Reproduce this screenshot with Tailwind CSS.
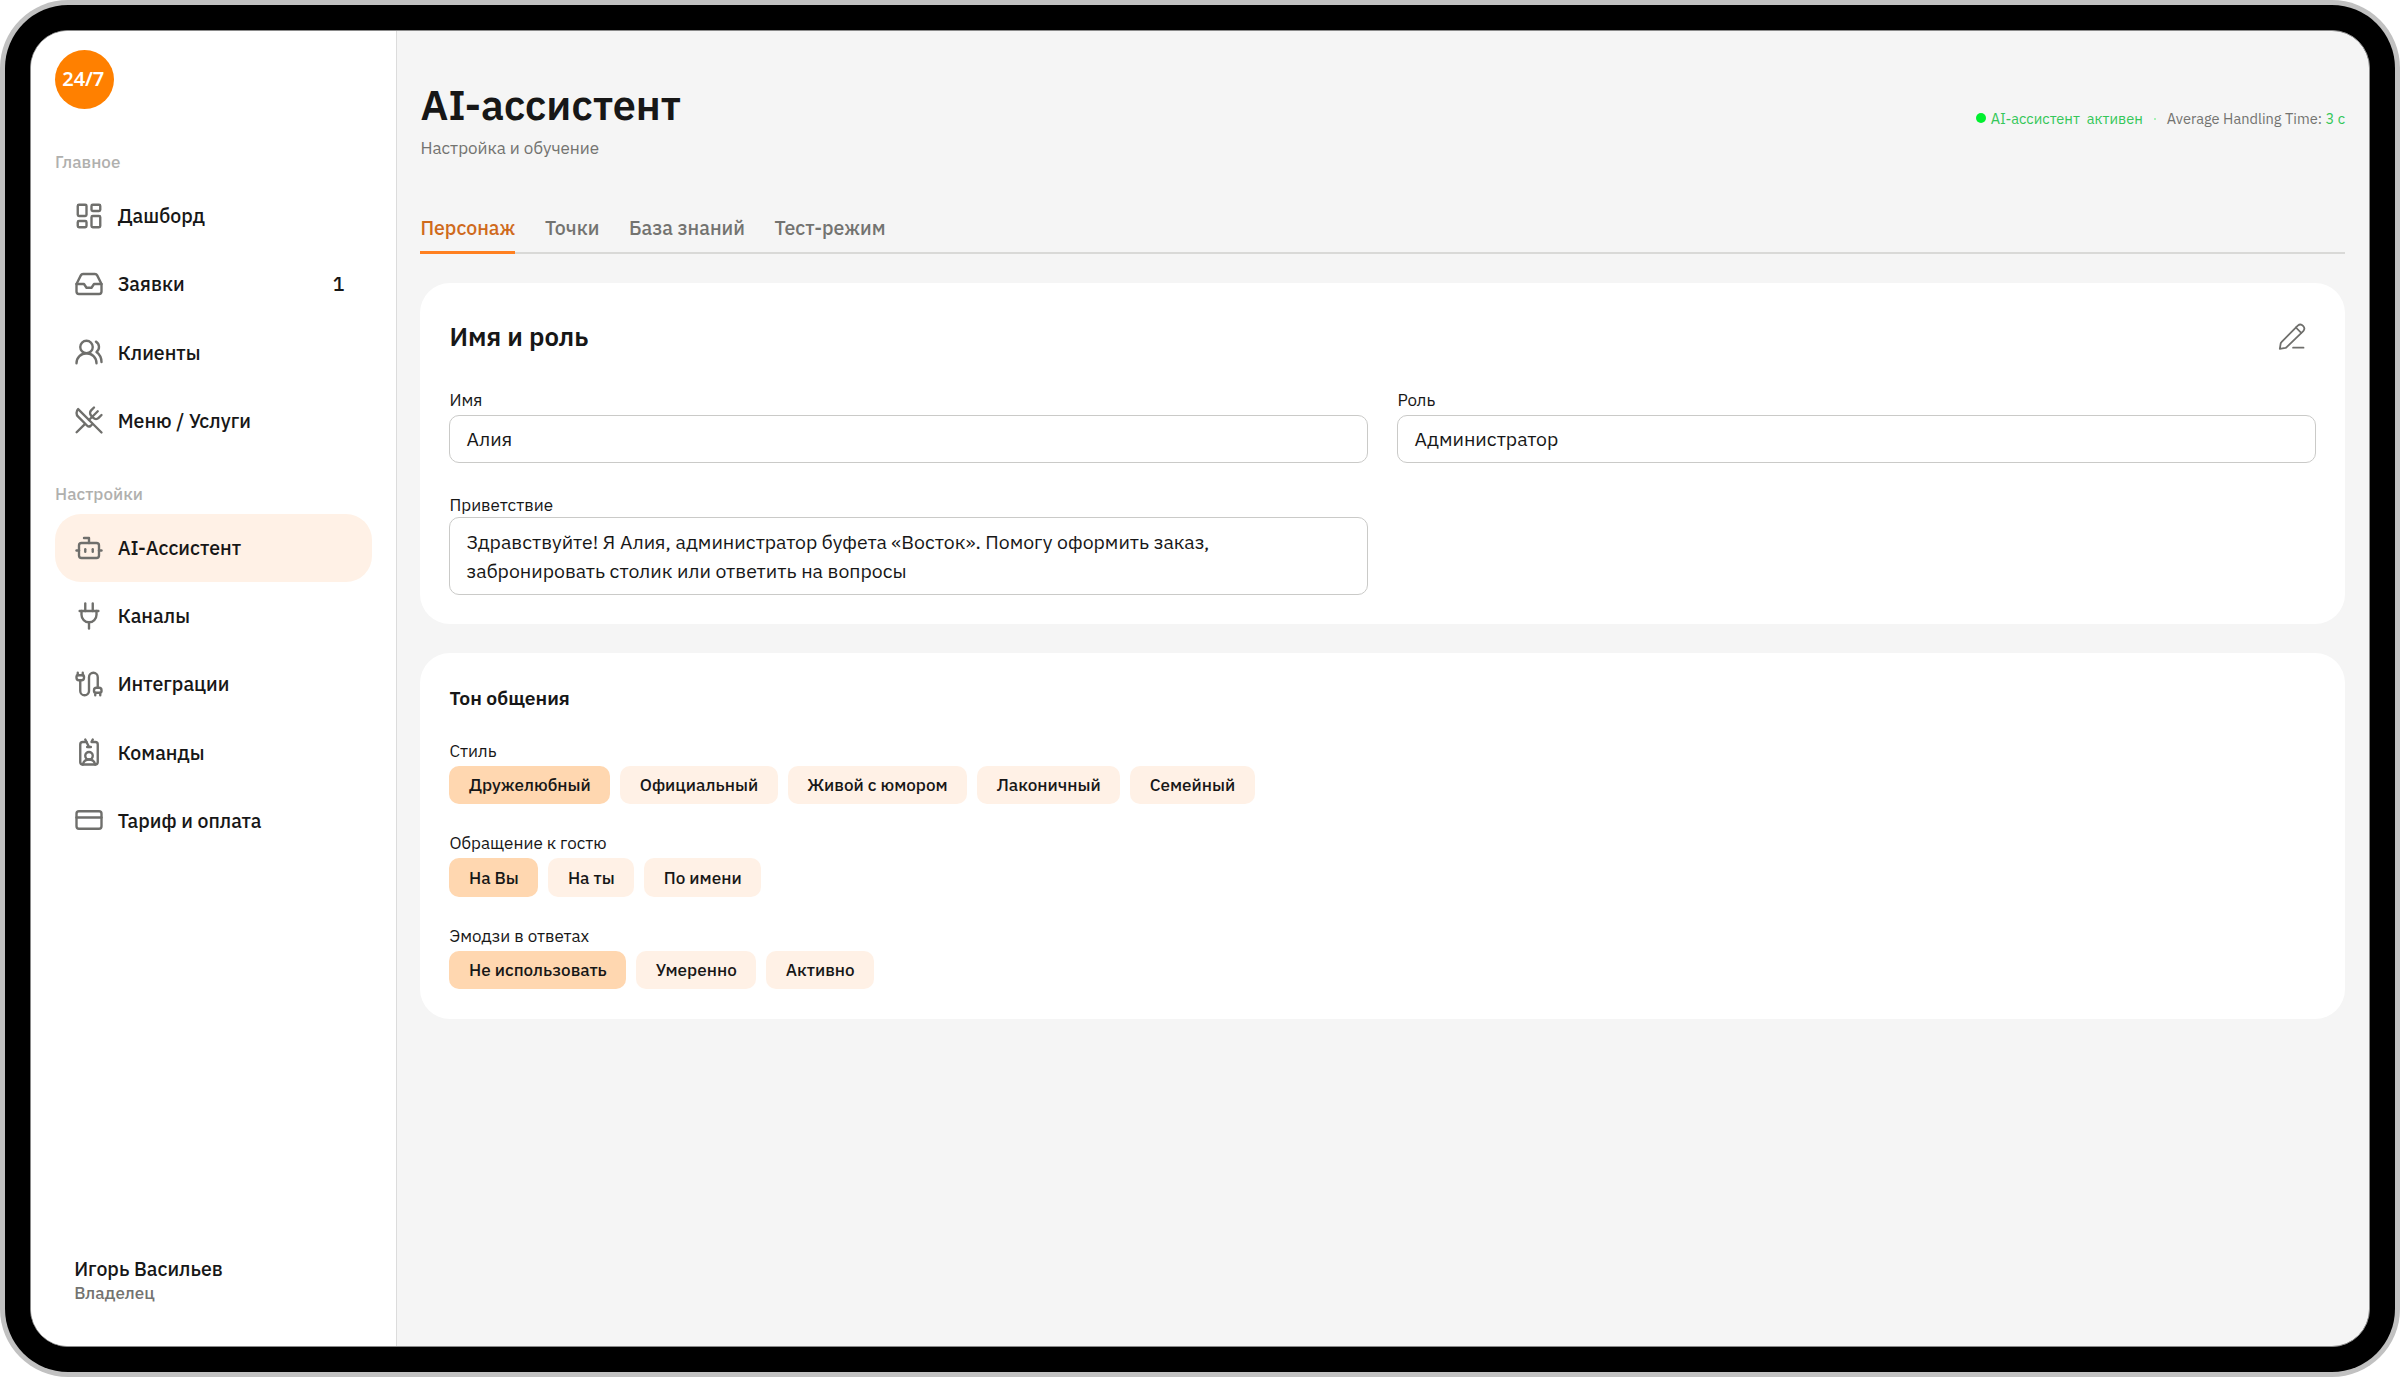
<!DOCTYPE html>
<html lang="ru">

<head>
    <meta charset="UTF-8">
    <meta name="viewport" content="width=device-width, initial-scale=1.0">
    <title>AI-ассистент</title>
    <script src="https://cdn.jsdelivr.net/npm/@tailwindcss/browser@4"></script>
</head>

<body class="bg-white font-['IBM_Plex_Sans','Noto_Sans',sans-serif] text-[#171717]">
    <!-- Tablet frame -->
    <div class="w-screen h-screen bg-[#c1c1c1] rounded-[68px] p-[5px]">
        <div class="w-full h-full bg-black rounded-[63px] p-[25px]">
            <div class="w-full h-full flex bg-[#f5f5f5] border border-[#8a8a8a] rounded-[38px] overflow-hidden">

                <!-- Sidebar -->
                <aside class="w-[366px] shrink-0 flex flex-col bg-white border-r border-[#dcdcdc] pt-[19px] pl-6 pr-[24.5px]">
                    <div class="size-[58.5px] rounded-full bg-[#ff8000] flex items-center justify-center text-white"><span class="font-['Noto_Sans',sans-serif] text-[20px] font-semibold tracking-[-0.1px] pr-0.5">24/7</span></div>

                    <p class="mt-[40.3px] h-[26px] leading-[26px] text-[17px] font-medium text-[#b0b0ae]">Главное</p>
                    <nav class="mt-[7px] text-[19.5px] font-medium">
                        <a class="flex items-center h-[68.2px] rounded-[26px] pl-[18.7px] pr-[27px] gap-[14px]">
                            <svg class="size-[30px] text-[#6f6f6c]" viewBox="0 0 24 24" fill="none" stroke="currentColor" stroke-width="1.9" stroke-linecap="round" stroke-linejoin="round">
                                <rect width="7" height="9" x="3" y="3" rx="1" /><rect width="7" height="5" x="14" y="3" rx="1" /><rect width="7" height="9" x="14" y="12" rx="1" /><rect width="7" height="5" x="3" y="16" rx="1" />
                            </svg>
                            <span>Дашборд</span>
                        </a>
                        <a class="flex items-center h-[68.2px] rounded-[26px] pl-[18.7px] pr-[27px] gap-[14px]">
                            <svg class="size-[30px] text-[#6f6f6c]" viewBox="0 0 24 24" fill="none" stroke="currentColor" stroke-width="1.9" stroke-linecap="round" stroke-linejoin="round">
                                <path d="M22 12h-6l-2 3h-4l-2-3H2" /><path d="M5.45 5.11 2 12v6a2 2 0 0 0 2 2h16a2 2 0 0 0 2-2v-6l-3.45-6.89A2 2 0 0 0 16.76 4H7.24a2 2 0 0 0-1.79 1.11z" />
                            </svg>
                            <span>Заявки</span>
                            <span class="ml-auto">1</span>
                        </a>
                        <a class="flex items-center h-[68.2px] rounded-[26px] pl-[18.7px] pr-[27px] gap-[14px]">
                            <svg class="size-[30px] text-[#6f6f6c]" viewBox="0 0 24 24" fill="none" stroke="currentColor" stroke-width="1.9" stroke-linecap="round" stroke-linejoin="round">
                                <path d="M18 21a8 8 0 0 0-16 0" /><circle cx="10" cy="8" r="5" /><path d="M22 20c0-3.37-2-6.5-4-8a5 5 0 0 0-.45-8.3" />
                            </svg>
                            <span>Клиенты</span>
                        </a>
                        <a class="flex items-center h-[68.2px] rounded-[26px] pl-[18.7px] pr-[27px] gap-[14px]">
                            <svg class="size-[30px] text-[#6f6f6c]" viewBox="0 0 24 24" fill="none" stroke="currentColor" stroke-width="1.9" stroke-linecap="round" stroke-linejoin="round">
                                <path d="m16 2-2.3 2.3a3 3 0 0 0 0 4.2l1.8 1.8a3 3 0 0 0 4.2 0L22 8" /><path d="M15 15 3.3 3.3a4.2 4.2 0 0 0 0 6l7.3 7.3c.7.7 2 .7 2.8 0L15 15Zm0 0 7 7" /><path d="m2.1 21.8 6.4-6.3" /><path d="m19 5-7 7" />
                            </svg>
                            <span>Меню / Услуги</span>
                        </a>
                    </nav>

                    <p class="mt-[26.4px] h-[26px] leading-[26px] text-[17px] font-medium text-[#b0b0ae]">Настройки</p>
                    <nav class="mt-[6.6px] text-[19.5px] font-medium">
                        <a class="flex items-center h-[68.2px] rounded-[26px] pl-[18.7px] pr-[27px] gap-[14px] bg-[#fff1e6]">
                            <svg class="size-[30px] text-[#6f6f6c]" viewBox="0 0 24 24" fill="none" stroke="currentColor" stroke-width="1.9" stroke-linecap="round" stroke-linejoin="round">
                                <path d="M12 8V4H8" /><rect width="16" height="12" x="4" y="8" rx="2" /><path d="M2 14h2" /><path d="M20 14h2" /><path d="M15 13v2" /><path d="M9 13v2" />
                            </svg>
                            <span>AI-Ассистент</span>
                        </a>
                        <a class="flex items-center h-[68.2px] rounded-[26px] pl-[18.7px] pr-[27px] gap-[14px]">
                            <svg class="size-[30px] text-[#6f6f6c]" viewBox="0 0 24 24" fill="none" stroke="currentColor" stroke-width="1.9" stroke-linecap="round" stroke-linejoin="round">
                                <path d="M12 22v-5" /><path d="M9 8V2" /><path d="M15 8V2" /><path d="M18 8v3a6 6 0 0 1-12 0V8" /><path d="M4.5 8h15" />
                            </svg>
                            <span>Каналы</span>
                        </a>
                        <a class="flex items-center h-[68.2px] rounded-[26px] pl-[18.7px] pr-[27px] gap-[14px]">
                            <svg class="size-[30px] text-[#6f6f6c]" viewBox="0 0 24 24" fill="none" stroke="currentColor" stroke-width="1.9" stroke-linecap="round" stroke-linejoin="round">
                                <path d="M17 21v-2a1 1 0 0 1-1-1v-1a2 2 0 0 1 2-2h2a2 2 0 0 1 2 2v1a1 1 0 0 1-1 1v2" /><path d="M19 15V6.5a3.5 3.5 0 0 0-7 0v11a3.5 3.5 0 0 1-7 0V9" /><path d="M21 19h-4" /><path d="M3 5V3" /><path d="M7 5V3" /><path d="M2 6a1 1 0 0 1 1-1h4a1 1 0 0 1 1 1v1a2 2 0 0 1-2 2H4a2 2 0 0 1-2-2z" />
                            </svg>
                            <span>Интеграции</span>
                        </a>
                        <a class="flex items-center h-[68.2px] rounded-[26px] pl-[18.7px] pr-[27px] gap-[14px]">
                            <svg class="size-[30px] text-[#6f6f6c]" viewBox="0 0 24 24" fill="none" stroke="currentColor" stroke-width="1.9" stroke-linecap="round" stroke-linejoin="round">
                                <path d="M13.5 8h-3" /><path d="m15 2-1 2h3a2 2 0 0 1 2 2v14a2 2 0 0 1-2 2H7a2 2 0 0 1-2-2V6a2 2 0 0 1 2-2h3" /><path d="M16.899 22A5 5 0 0 0 7.1 22" /><path d="m9 2 3 6" /><circle cx="12" cy="15" r="3" />
                            </svg>
                            <span>Команды</span>
                        </a>
                        <a class="flex items-center h-[68.2px] rounded-[26px] pl-[18.7px] pr-[27px] gap-[14px]">
                            <svg class="size-[30px] text-[#6f6f6c]" viewBox="0 0 24 24" fill="none" stroke="currentColor" stroke-width="1.9" stroke-linecap="round" stroke-linejoin="round">
                                <rect width="20" height="14" x="2" y="5" rx="2" /><path d="M2 10h20" />
                            </svg>
                            <span>Тариф и оплата</span>
                        </a>
                    </nav>

                    <div class="mt-auto pl-[19.2px] pb-[40.6px] font-medium">
                        <p class="text-[19.5px] leading-[26.4px]">Игорь Васильев</p>
                        <p class="text-[17px] leading-[23.4px] text-[#737370]">Владелец</p>
                    </div>
                </aside>

                <!-- Content -->
                <main class="flex-1 pt-[48.6px] pl-[23.4px] pr-6">
                    <div class="flex items-start justify-between">
                        <div>
                            <h1 class="text-[41.4px] leading-[50px] font-semibold">AI-ассистент</h1>
                            <p class="mt-1.5 text-[17px] leading-6 text-[#737370]">Настройка и обучение</p>
                        </div>
                        <div class="mt-[29.8px] flex items-center text-[14.6px] leading-5 text-[#34c759] whitespace-pre">
                            <span class="size-2.5 rounded-full bg-[#00f02f] mr-[4.5px] -mt-0.5"></span>
                            <span>AI-ассистент  активен</span>
                            <span class="size-[2px] rounded-full bg-[#8cf0a0] mx-[11px]"></span>
                            <span class="text-[#737370]">Average Handling Time: </span><span>3 с</span>
                        </div>
                    </div>

                    <!-- Tabs -->
                    <div class="mt-[54.4px] flex gap-[29.6px] border-b-2 border-[#d9d9d7] text-[19.5px] leading-7 font-medium text-[#737370]">
                        <button class="-mb-0.5 pb-[9.3px] border-b-[3px] border-[#ff8020] text-[#cf6a1c]">Персонаж</button>
                        <button class="pb-[10.3px]">Точки</button>
                        <button class="pb-[10.3px]">База знаний</button>
                        <button class="pb-[10.3px]">Тест-режим</button>
                    </div>

                    <!-- Name and role -->
                    <section class="mt-[28.7px] h-[341px] bg-white rounded-[30px] px-[29.1px] pt-[35.4px]">
                        <div class="flex items-center justify-between h-9 pr-[8.4px]">
                            <h2 class="text-[25.8px] leading-9 pt-px font-semibold">Имя и роль</h2>
                            <svg class="size-[30.6px] text-[#6f6f6c]" viewBox="0 0 24 24" fill="none" stroke="currentColor" stroke-width="1.4" stroke-linecap="round" stroke-linejoin="round">
                                <path d="M2.2 21.8 2.9 17.6a2 2 0 0 1 .6-1L16.3 3.6a3.05 3.05 0 0 1 4.3 4.3L7.6 20.5a2 2 0 0 1-1 .6Z" /><path d="m14.8 5.1 4.2 4.3" /><path d="M12.6 20.9h8.2" />
                            </svg>
                        </div>
                        <div class="mt-[33.5px] grid grid-cols-2 gap-x-[29.5px] gap-y-[29.6px]">
                            <div>
                                <p class="text-[17px] leading-6">Имя</p>
                                <div class="mt-[2.7px] h-[48.7px] flex items-center border-[1.5px] border-[#cacac8] rounded-[10px] px-4 text-[19.48px]">Алия</div>
                            </div>
                            <div>
                                <p class="text-[17px] leading-6">Роль</p>
                                <div class="mt-[2.7px] h-[48.7px] flex items-center border-[1.5px] border-[#cacac8] rounded-[10px] px-4 text-[19.48px]">Администратор</div>
                            </div>
                            <div>
                                <p class="text-[17px] leading-6">Приветствие</p>
                                <div class="mt-[0.4px] h-[77.7px] border-[1.5px] border-[#cacac8] rounded-[10px] px-4 pt-[8.4px] text-[19.48px] leading-[29.2px]">Здравствуйте! Я Алия, администратор буфета «Восток». Помогу оформить заказ,<br>забронировать столик или ответить на вопросы</div>
                            </div>
                        </div>
                    </section>

                    <!-- Tone of voice -->
                    <section class="mt-[29.3px] h-[365.5px] bg-white rounded-[30px] px-[29.1px] pt-[30.4px]">
                        <h3 class="text-[19.3px] leading-7 font-semibold">Тон общения</h3>

                        <p class="mt-[27.2px] text-[17px] leading-6">Стиль</p>
                        <div class="mt-[2.7px] flex gap-[10px] text-[17.1px] font-medium">
                            <button class="h-[38.7px] px-[19.5px] rounded-[10px] bg-[#ffd7b0]">Дружелюбный</button>
                            <button class="h-[38.7px] px-[19.5px] rounded-[10px] bg-[#fff1e6]">Официальный</button>
                            <button class="h-[38.7px] px-[19.5px] rounded-[10px] bg-[#fff1e6]">Живой с юмором</button>
                            <button class="h-[38.7px] px-[19.5px] rounded-[10px] bg-[#fff1e6]">Лаконичный</button>
                            <button class="h-[38.7px] px-[19.5px] rounded-[10px] bg-[#fff1e6]">Семейный</button>
                        </div>

                        <p class="mt-[27.2px] text-[17px] leading-6">Обращение к гостю</p>
                        <div class="mt-[2.7px] flex gap-[10px] text-[17.1px] font-medium">
                            <button class="h-[38.7px] px-[19.5px] rounded-[10px] bg-[#ffd7b0]">На Вы</button>
                            <button class="h-[38.7px] px-[19.5px] rounded-[10px] bg-[#fff1e6]">На ты</button>
                            <button class="h-[38.7px] px-[19.5px] rounded-[10px] bg-[#fff1e6]">По имени</button>
                        </div>

                        <p class="mt-[27.2px] text-[17px] leading-6">Эмодзи в ответах</p>
                        <div class="mt-[2.7px] flex gap-[10px] text-[17.1px] font-medium">
                            <button class="h-[38.7px] px-[19.5px] rounded-[10px] bg-[#ffd7b0]">Не использовать</button>
                            <button class="h-[38.7px] px-[19.5px] rounded-[10px] bg-[#fff1e6]">Умеренно</button>
                            <button class="h-[38.7px] px-[19.5px] rounded-[10px] bg-[#fff1e6]">Активно</button>
                        </div>
                    </section>
                </main>
            </div>
        </div>
    </div>
</body>

</html>
